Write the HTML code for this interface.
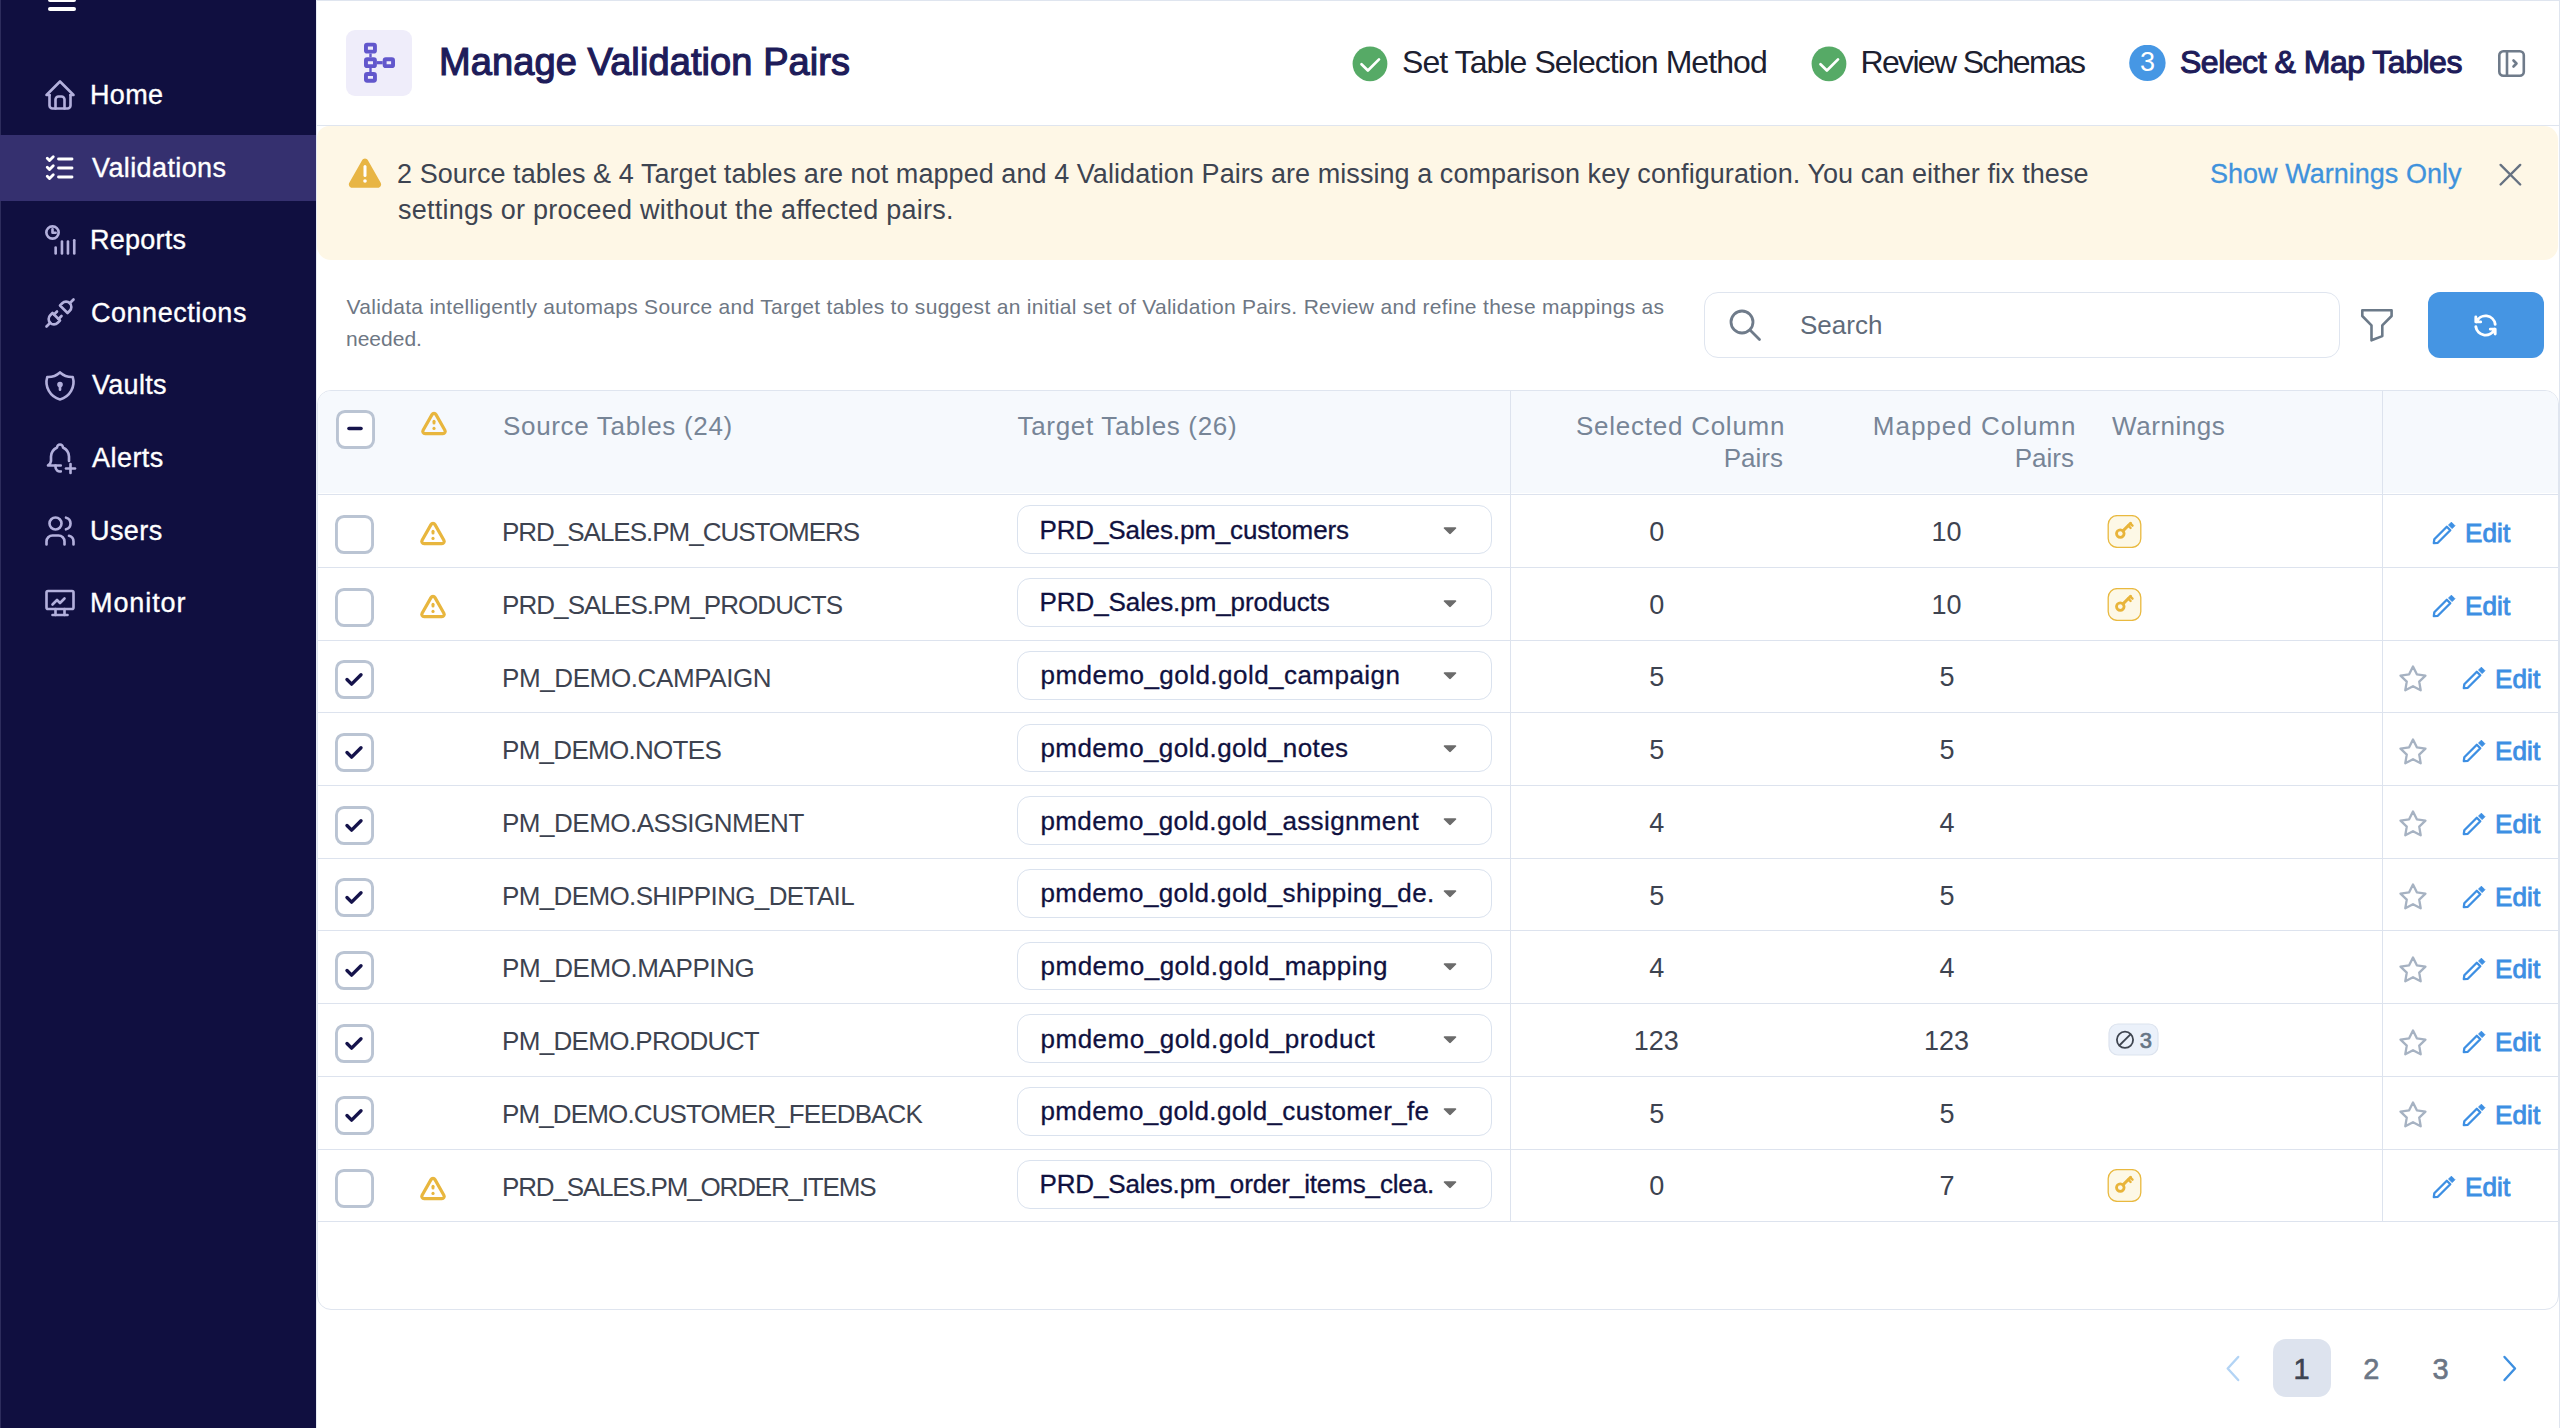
<!DOCTYPE html>
<html><head><meta charset="utf-8"><title>Manage Validation Pairs</title>
<style>
html,body{margin:0;padding:0;}
body{width:2560px;height:1428px;overflow:hidden;position:relative;background:#fff;font-family:"Liberation Sans", sans-serif;}
.t{position:absolute;white-space:nowrap;line-height:1;}
.r{position:absolute;display:block;}
</style></head><body>
<div class="r" style="left:0px;top:0px;width:316px;height:1428px;background:#100f40;"></div>
<div class="r" style="left:0px;top:0px;width:1px;height:1428px;background:#2d2c5c;"></div>
<div class="r" style="left:0px;top:135px;width:316px;height:66px;background:#35306f;"></div>
<div class="r" style="left:48px;top:-3px;width:28px;height:5px;background:#fff;border-radius:2px;"></div>
<div class="r" style="left:48px;top:7px;width:28px;height:4px;background:#fff;border-radius:2px;"></div>
<div class="t" style="top: 81.94px; font-size: 27px; color: rgb(255, 255, 255); font-weight: 400; left: 90px; -webkit-text-stroke: 0.35px rgb(255, 255, 255); letter-spacing: 0.331px;">Home</div>
<svg class="r" style="left:42px;top:77.1px;" width="36" height="36" viewBox="0 0 24 24" fill="none"><g stroke="#b3b0dc" stroke-width="1.75" stroke-linecap="round" stroke-linejoin="round"><path d="M5 12l-2 0l9 -9l9 9l-2 0"></path><path d="M5 12v7a2 2 0 0 0 2 2h10a2 2 0 0 0 2 -2v-7"></path><path d="M9 21v-6a2 2 0 0 1 2 -2h2a2 2 0 0 1 2 2v6"></path></g></svg>
<div class="t" style="top: 154.56px; font-size: 27px; color: rgb(255, 255, 255); font-weight: 400; left: 92px; -webkit-text-stroke: 0.35px rgb(255, 255, 255); letter-spacing: 0.392px;">Validations</div>
<svg class="r" style="left:42px;top:149.72000000000003px;" width="36" height="36" viewBox="0 0 24 24" fill="none"><g stroke="#ffffff" stroke-width="1.9" stroke-linecap="round" stroke-linejoin="round"><path d="M3.5 5.5l1.5 1.5l2.5 -2.5"></path><path d="M3.5 11.5l1.5 1.5l2.5 -2.5"></path><path d="M3.5 17.5l1.5 1.5l2.5 -2.5"></path><path d="M11 6l9 0"></path><path d="M11 12l9 0"></path><path d="M11 18l9 0"></path></g></svg>
<div class="t" style="top: 227.18px; font-size: 27px; color: rgb(255, 255, 255); font-weight: 400; left: 90px; -webkit-text-stroke: 0.35px rgb(255, 255, 255); letter-spacing: 0.243px;">Reports</div>
<svg class="r" style="left:42px;top:222.34000000000003px;" width="36" height="36" viewBox="0 0 24 24" fill="none"><g stroke="#b3b0dc" stroke-width="1.75" stroke-linecap="round" stroke-linejoin="round"><circle cx="7" cy="7" r="4.1"></circle><path d="M7 4.9v2.3h2.1"></path><path d="M9.1 17v4"></path><path d="M13.3 13v8"></path><path d="M17.3 13v8"></path><path d="M21.5 12.2v8.8"></path></g></svg>
<div class="t" style="top: 299.8px; font-size: 27px; color: rgb(255, 255, 255); font-weight: 400; left: 91px; -webkit-text-stroke: 0.35px rgb(255, 255, 255); letter-spacing: 0.53px;">Connections</div>
<svg class="r" style="left:42px;top:294.96000000000004px;" width="36" height="36" viewBox="0 0 24 24" fill="none"><g stroke="#b3b0dc" stroke-width="1.75" stroke-linecap="round" stroke-linejoin="round"><path d="M7 12l5 5l-1.5 1.5a3.536 3.536 0 1 1 -5 -5l1.5 -1.5z"></path><path d="M17 12l-5 -5l1.5 -1.5a3.536 3.536 0 1 1 5 5l-1.5 1.5z"></path><path d="M3 21l2.5 -2.5"></path><path d="M18.5 5.5l2.5 -2.5"></path><path d="M10 11l-2 2"></path><path d="M13 14l-2 2"></path></g></svg>
<div class="t" style="top: 372.42px; font-size: 27px; color: rgb(255, 255, 255); font-weight: 400; left: 92px; -webkit-text-stroke: 0.35px rgb(255, 255, 255); letter-spacing: 0.293px;">Vaults</div>
<svg class="r" style="left:42px;top:367.58000000000004px;" width="36" height="36" viewBox="0 0 24 24" fill="none"><g stroke="#b3b0dc" stroke-width="1.75" stroke-linecap="round" stroke-linejoin="round"><path d="M12 3a12 12 0 0 0 8.5 3a12 12 0 0 1 -8.5 15a12 12 0 0 1 -8.5 -15a12 12 0 0 0 8.5 -3"></path><circle cx="12" cy="11" r="1" fill="#b3b0dc"></circle><path d="M12 12l0 2.5"></path></g></svg>
<div class="t" style="top: 445.04px; font-size: 27px; color: rgb(255, 255, 255); font-weight: 400; left: 92px; -webkit-text-stroke: 0.35px rgb(255, 255, 255); letter-spacing: 0.457px;">Alerts</div>
<svg class="r" style="left:42px;top:440.20000000000005px;" width="36" height="36" viewBox="0 0 24 24" fill="none"><g stroke="#b3b0dc" stroke-width="1.75" stroke-linecap="round" stroke-linejoin="round"><path d="M12.5 17h-8.5a4 4 0 0 0 2 -3v-3a7 7 0 0 1 4 -6a2 2 0 1 1 4 0a7 7 0 0 1 4 6v3"></path><path d="M9 17v1a3 3 0 0 0 3.51 2.957"></path><path d="M16 19h6"></path><path d="M19 16v6"></path></g></svg>
<div class="t" style="top: 517.66px; font-size: 27px; color: rgb(255, 255, 255); font-weight: 400; left: 90px; -webkit-text-stroke: 0.35px rgb(255, 255, 255); letter-spacing: 0.424px;">Users</div>
<svg class="r" style="left:42px;top:512.8199999999999px;" width="36" height="36" viewBox="0 0 24 24" fill="none"><g stroke="#b3b0dc" stroke-width="1.75" stroke-linecap="round" stroke-linejoin="round"><circle cx="9" cy="7" r="4"></circle><path d="M3 21v-2a4 4 0 0 1 4 -4h4a4 4 0 0 1 4 4v2"></path><path d="M16 3.13a4 4 0 0 1 0 7.75"></path><path d="M21 21v-2a4 4 0 0 0 -3 -3.85"></path></g></svg>
<div class="t" style="top: 590.28px; font-size: 27px; color: rgb(255, 255, 255); font-weight: 400; left: 90px; -webkit-text-stroke: 0.35px rgb(255, 255, 255); letter-spacing: 0.91px;">Monitor</div>
<svg class="r" style="left:42px;top:585.4399999999999px;" width="36" height="36" viewBox="0 0 24 24" fill="none"><g stroke="#b3b0dc" stroke-width="1.75" stroke-linecap="round" stroke-linejoin="round"><rect x="3" y="4" width="18" height="12" rx="1"></rect><path d="M7 20h10"></path><path d="M9 16v4"></path><path d="M15 16v4"></path><path d="M7 13l3 -3l2 2l3 -3"></path></g></svg>
<div class="r" style="left:316px;top:0px;width:2244px;height:1428px;background:#ffffff;"></div>
<div class="r" style="left:316px;top:0px;width:2244px;height:1px;background:#dfe5ef;"></div>
<div class="r" style="left:316px;top:125px;width:2244px;height:1px;background:#dfe5ef;"></div>
<div class="r" style="left:316px;top:0px;width:1px;height:1428px;background:#e6ebf3;"></div>
<div class="r" style="left:2559px;top:0px;width:1px;height:1428px;background:#dfe5ef;"></div>
<svg class="r" style="left:346px;top:30px;" width="66" height="66" viewBox="0 0 66 66" fill="none"><rect width="66" height="66" rx="9" fill="#efedfa"></rect><g stroke="#6257cc" stroke-width="3.9" fill="none" stroke-linejoin="round"><rect x="19.95" y="14.65" width="9" height="7" rx="1.2"></rect><rect x="19.95" y="29.25" width="9" height="6.9" rx="1.2"></rect><rect x="19.95" y="43.95" width="9" height="6.8" rx="1.2"></rect><rect x="38.65" y="29.25" width="8.4" height="6.9" rx="1.2"></rect></g><g stroke="#6257cc" fill="none"><path d="M24.5 23.6v3.7M24.5 38.1v3.9" stroke-width="2.4"></path><path d="M30.9 32.7h5.8" stroke-width="3.2"></path></g></svg>
<div class="t" style="top: 43.33px; font-size: 38px; color: rgb(30, 28, 90); font-weight: 400; left: 439px; -webkit-text-stroke: 1.2px rgb(30, 28, 90); letter-spacing: 0.091px;">Manage Validation Pairs</div>
<svg class="r" style="left:1352px;top:46px" width="36" height="36" viewBox="0 0 36 36"><circle cx="18" cy="17.8" r="17.4" fill="#56aa66"></circle><path d="M9.5 18.2l6.4 6.3l11.1 -11.1" stroke="#fff" stroke-width="2.7" fill="none" stroke-linecap="round" stroke-linejoin="round"></path></svg>
<div class="t" style="top: 45.71px; font-size: 32px; color: rgb(28, 32, 48); font-weight: 400; left: 1402px; letter-spacing: -0.931px;">Set Table Selection Method</div>
<svg class="r" style="left:1811px;top:46px" width="36" height="36" viewBox="0 0 36 36"><circle cx="18" cy="17.8" r="17.4" fill="#56aa66"></circle><path d="M9.5 18.2l6.4 6.3l11.1 -11.1" stroke="#fff" stroke-width="2.7" fill="none" stroke-linecap="round" stroke-linejoin="round"></path></svg>
<div class="t" style="top: 45.71px; font-size: 32px; color: rgb(28, 32, 48); font-weight: 400; left: 1860.5px; letter-spacing: -1.669px;">Review Schemas</div>
<svg class="r" style="left:2129px;top:45px" width="37" height="37" viewBox="0 0 37 37"><circle cx="18.4" cy="17.9" r="18.2" fill="#4697e4"></circle></svg>
<div class="t" style="top: 49.44px; font-size: 27px; color: rgb(255, 255, 255); font-weight: 400; left: 1847.41px; width: 600px; text-align: center;">3</div>
<div class="t" style="top: 45.71px; font-size: 32px; color: rgb(30, 28, 90); font-weight: 400; left: 2180px; -webkit-text-stroke: 1.1px rgb(30, 28, 90); letter-spacing: -0.484px;">Select &amp; Map Tables</div>
<svg class="r" style="left:2497px;top:49px;" width="29" height="29" viewBox="0 0 29 29" fill="none"><g stroke="#6f7b8a" stroke-width="2.6" fill="none" stroke-linejoin="round" stroke-linecap="round"><rect x="2.3" y="2.3" width="24.5" height="24.5" rx="4"></rect><path d="M10 2.3v24.5"></path><path d="M16.5 11.5l3 3l-3 3"></path></g></svg>
<div class="r" style="left:317px;top:126px;width:2241px;height:134px;background:#fef7e6;border-radius:0 0 0 0;border-top-left-radius:12px;border-top-right-radius:14px;border-bottom-left-radius:14px;border-bottom-right-radius:14px;"></div>
<svg class="r" style="left:348px;top:157px;" width="34" height="32" viewBox="0 0 34 32" fill="none"><path d="M17 1.5c1.2 0 2.3 0.7 2.9 1.8l12.8 22.5c1.3 2.3-0.3 5-2.9 5H4.2c-2.6 0-4.2-2.8-2.9-5L14.1 3.3C14.7 2.2 15.8 1.5 17 1.5z" fill="#e8b544"></path><path d="M17 9.5v9" stroke="#fff" stroke-width="3" stroke-linecap="round"></path><circle cx="17" cy="24" r="1.8" fill="#fff"></circle></svg>
<div class="t" style="top: 160.54px; font-size: 27px; color: rgb(61, 68, 81); font-weight: 400; left: 397px; letter-spacing: 0.061px;">2 Source tables &amp; 4 Target tables are not mapped and 4 Validation Pairs are missing a comparison key configuration. You can either fix these</div>
<div class="t" style="top: 197.14px; font-size: 27px; color: rgb(61, 68, 81); font-weight: 400; left: 398px; letter-spacing: 0.243px;">settings or proceed without the affected pairs.</div>
<div class="t" style="top: 161.14px; font-size: 27px; color: rgb(63, 146, 220); font-weight: 400; left: 2210px; -webkit-text-stroke: 0.3px rgb(63, 146, 220); letter-spacing: 0.024px;">Show Warnings Only</div>
<svg class="r" style="left:2497px;top:161px;" width="26" height="26" viewBox="0 0 26 26" fill="none"><path d="M3.6 3.9l19.6 19.6M23.2 3.9l-19.6 19.6" stroke="#667282" stroke-width="2.4" stroke-linecap="round"></path></svg>
<div class="t" style="top: 295.52px; font-size: 21px; color: rgb(110, 119, 132); font-weight: 400; left: 346.5px; letter-spacing: 0.302px;">Validata intelligently automaps Source and Target tables to suggest an initial set of Validation Pairs. Review and refine these mappings as</div>
<div class="t" style="top: 327.62px; font-size: 21px; color: rgb(110, 119, 132); font-weight: 400; left: 346px;">needed.</div>
<div class="r" style="left:1704px;top:292px;width:636px;height:66px;border:1.5px solid #dfe5ef;border-radius:14px;box-sizing:border-box;background:#fff;"></div>
<svg class="r" style="left:1728px;top:308px;" width="34" height="34" viewBox="0 0 34 34" fill="none"><g stroke="#6f7b8a" stroke-width="2.8" fill="none" stroke-linecap="round"><circle cx="14" cy="14" r="11"></circle><path d="M22 22l9.5 9.5"></path></g></svg>
<div class="t" style="top: 312.49px; font-size: 26px; color: rgb(95, 107, 122); font-weight: 400; left: 1800px;">Search</div>
<svg class="r" style="left:2358px;top:306px;" width="38" height="38" viewBox="0 0 38 38" fill="none"><path d="M4.3 4.3H33.6V10L24.3 19.3V30.1L13.5 34.3V19.3L4.3 10Z" stroke="#6c7a89" stroke-width="2.6" fill="none" stroke-linejoin="round"></path></svg>
<div class="r" style="left:2428px;top:292px;width:116px;height:66px;background:#4595e3;border-radius:12px;"></div>
<svg class="r" style="left:2471px;top:311px;" width="29" height="29" viewBox="0 0 24 24" fill="none"><g stroke="#fff" stroke-width="2.4" fill="none" stroke-linecap="round" stroke-linejoin="round"><path d="M20 11a8.1 8.1 0 0 0 -15.5 -2m-.5 -4v4h4"></path><path d="M4 13a8.1 8.1 0 0 0 15.5 2m.5 4v-4h-4"></path></g></svg>
<div class="r" style="left:317px;top:390px;width:2242px;height:920px;border:1px solid #dfe5ef;border-radius:14px;box-sizing:border-box;background:#fff;"></div>
<div class="r" style="left:318px;top:391px;width:2240px;height:102px;background:#f6f9fd;border-top-left-radius:13px;border-top-right-radius:13px;"></div>
<div class="r" style="left:318px;top:494px;width:2240px;height:1px;background:#dde3ee;"></div>
<div class="r" style="left:1510px;top:391px;width:1px;height:831px;background:#dde3ee;"></div>
<div class="r" style="left:2382px;top:391px;width:1px;height:831px;background:#dde3ee;"></div>
<svg class="r" style="left:336px;top:410px" width="39" height="39" viewBox="0 0 39 39"><rect x="1.45" y="1.45" width="36.1" height="36.1" rx="7.5" fill="#fff" stroke="#bac4d3" stroke-width="2.9"></rect><path d="M13 18.5h12" stroke="#15134b" stroke-width="3.6" stroke-linecap="round"></path></svg>
<svg class="r" style="left:420px;top:410px" width="28" height="26" viewBox="0 0 28 26"><path d="M14 3.4c0.9 0 1.6 0.5 2 1.2l8.9 15.6c0.9 1.6-0.2 3.4-2 3.4H5.1c-1.8 0-2.9-1.8-2-3.4L12 4.6c0.4-0.7 1.1-1.2 2-1.2z" stroke="#e8b63e" stroke-width="3.2" fill="none" stroke-linejoin="round"></path><path d="M14 11.3v1.7" stroke="#e8b63e" stroke-width="3" stroke-linecap="round"></path><circle cx="14" cy="18.4" r="1.6" fill="#e8b63e"></circle></svg>
<div class="t" style="top: 412.99px; font-size: 26px; color: rgb(119, 133, 151); font-weight: 400; left: 503px; letter-spacing: 0.673px;">Source Tables (24)</div>
<div class="t" style="top: 412.99px; font-size: 26px; color: rgb(119, 133, 151); font-weight: 400; left: 1017.5px; letter-spacing: 0.674px;">Target Tables (26)</div>
<div class="t" style="top: 412.99px; font-size: 26px; color: rgb(119, 133, 151); font-weight: 400; right: 774.79px; text-align: right; letter-spacing: 0.747px;">Selected Column</div>
<div class="t" style="top:445.29px;font-size:26px;color:#778597;font-weight:400;right:777px;text-align:right;">Pairs</div>
<div class="t" style="top: 412.99px; font-size: 26px; color: rgb(119, 133, 151); font-weight: 400; right: 483.55px; text-align: right; letter-spacing: 0.991px;">Mapped Column</div>
<div class="t" style="top:445.29px;font-size:26px;color:#778597;font-weight:400;right:486px;text-align:right;">Pairs</div>
<div class="t" style="top: 412.99px; font-size: 26px; color: rgb(119, 133, 151); font-weight: 400; left: 2112px; letter-spacing: 0.564px;">Warnings</div>
<svg class="r" style="left:335px;top:515px" width="39" height="39" viewBox="0 0 39 39"><rect x="1.45" y="1.45" width="36.1" height="36.1" rx="7.5" fill="#fff" stroke="#bac4d3" stroke-width="2.9"></rect></svg>
<svg class="r" style="left:419px;top:520px" width="28" height="26" viewBox="0 0 28 26"><path d="M14 3.4c0.9 0 1.6 0.5 2 1.2l8.9 15.6c0.9 1.6-0.2 3.4-2 3.4H5.1c-1.8 0-2.9-1.8-2-3.4L12 4.6c0.4-0.7 1.1-1.2 2-1.2z" stroke="#e8b63e" stroke-width="3.2" fill="none" stroke-linejoin="round"></path><path d="M14 11.3v1.7" stroke="#e8b63e" stroke-width="3" stroke-linecap="round"></path><circle cx="14" cy="18.4" r="1.6" fill="#e8b63e"></circle></svg>
<div class="t" style="top: 519.29px; font-size: 26px; color: rgb(61, 67, 80); font-weight: 400; left: 502px; letter-spacing: -1.018px;">PRD_SALES.PM_CUSTOMERS</div>
<div class="r" style="left:1017px;top:505px;width:475px;height:49px;border:1px solid #dae2ee;border-radius:13px;box-sizing:border-box;background:#fff;"></div>
<div class="t" style="top: 516.79px; font-size: 26px; color: rgb(16, 17, 63); font-weight: 400; left: 1039.5px; -webkit-text-stroke: 0.3px rgb(16, 17, 63); letter-spacing: -0.124px;">PRD_Sales.pm_customers</div>
<svg class="r" style="left:1443px;top:525.8px" width="14" height="9" viewBox="0 0 14 9"><path d="M1.5 1.2h11c0.7 0 1.1 0.8 0.6 1.3l-5.3 5.3c-0.5 0.5-1.1 0.5-1.6 0l-5.3-5.3c-0.5-0.5-0.1-1.3 0.6-1.3z" fill="#6b6b6b"></path></svg>
<div class="t" style="top: 519.04px; font-size: 27px; color: rgb(61, 67, 80); font-weight: 400; left: 1356.71px; width: 600px; text-align: center;">0</div>
<div class="t" style="top: 519.04px; font-size: 27px; color: rgb(61, 67, 80); font-weight: 400; left: 1646.51px; width: 600px; text-align: center;">10</div>
<svg class="r" style="left:2107px;top:515.0px" width="35" height="33" viewBox="0 0 35 33"><rect x="1.2" y="0.6" width="32.6" height="31.8" rx="9" fill="#fdf8e6" stroke="#e9b93f" stroke-width="1.3"></rect><g stroke="#e8b43a" fill="none" stroke-linecap="round"><circle cx="13.3" cy="18.6" r="3.8" stroke-width="2.8"></circle><path d="M16 15.9l7.6 -7.6" stroke-width="3"></path><path d="M21.2 10.6l2.4 2.4M23.3 8.5l2.2 2.2" stroke-width="2.4"></path></g></svg>
<svg class="r" style="left:2430.5px;top:520.0px" width="26" height="26" viewBox="-2 -2 26 26"><path d="M1.3 17.3L13.8 4.8L17.3 8.3L4.8 20.8L0.8 21.2Z" stroke="#3d8fe3" stroke-width="2.3" fill="none" stroke-linejoin="round"></path><path d="M15.6 3L18.4 0.2L21.9 3.7L19.1 6.5Z" fill="#3d8fe3" stroke="#3d8fe3" stroke-width="1" stroke-linejoin="round"></path></svg>
<div class="t" style="top: 520.19px; font-size: 26px; color: rgb(61, 143, 227); font-weight: 400; left: 2465px; -webkit-text-stroke: 0.9px rgb(61, 143, 227); letter-spacing: 0.141px;">Edit</div>
<div class="r" style="left:318px;top:567px;width:2240px;height:1px;background:#dde3ee;"></div>
<svg class="r" style="left:335px;top:588px" width="39" height="39" viewBox="0 0 39 39"><rect x="1.45" y="1.45" width="36.1" height="36.1" rx="7.5" fill="#fff" stroke="#bac4d3" stroke-width="2.9"></rect></svg>
<svg class="r" style="left:419px;top:593px" width="28" height="26" viewBox="0 0 28 26"><path d="M14 3.4c0.9 0 1.6 0.5 2 1.2l8.9 15.6c0.9 1.6-0.2 3.4-2 3.4H5.1c-1.8 0-2.9-1.8-2-3.4L12 4.6c0.4-0.7 1.1-1.2 2-1.2z" stroke="#e8b63e" stroke-width="3.2" fill="none" stroke-linejoin="round"></path><path d="M14 11.3v1.7" stroke="#e8b63e" stroke-width="3" stroke-linecap="round"></path><circle cx="14" cy="18.4" r="1.6" fill="#e8b63e"></circle></svg>
<div class="t" style="top: 591.99px; font-size: 26px; color: rgb(61, 67, 80); font-weight: 400; left: 502px; letter-spacing: -0.931px;">PRD_SALES.PM_PRODUCTS</div>
<div class="r" style="left:1017px;top:578px;width:475px;height:49px;border:1px solid #dae2ee;border-radius:13px;box-sizing:border-box;background:#fff;"></div>
<div class="t" style="top: 589.49px; font-size: 26px; color: rgb(16, 17, 63); font-weight: 400; left: 1039.5px; -webkit-text-stroke: 0.3px rgb(16, 17, 63); letter-spacing: -0.086px;">PRD_Sales.pm_products</div>
<svg class="r" style="left:1443px;top:598.5px" width="14" height="9" viewBox="0 0 14 9"><path d="M1.5 1.2h11c0.7 0 1.1 0.8 0.6 1.3l-5.3 5.3c-0.5 0.5-1.1 0.5-1.6 0l-5.3-5.3c-0.5-0.5-0.1-1.3 0.6-1.3z" fill="#6b6b6b"></path></svg>
<div class="t" style="top: 591.74px; font-size: 27px; color: rgb(61, 67, 80); font-weight: 400; left: 1356.71px; width: 600px; text-align: center;">0</div>
<div class="t" style="top: 591.74px; font-size: 27px; color: rgb(61, 67, 80); font-weight: 400; left: 1646.51px; width: 600px; text-align: center;">10</div>
<svg class="r" style="left:2107px;top:587.7px" width="35" height="33" viewBox="0 0 35 33"><rect x="1.2" y="0.6" width="32.6" height="31.8" rx="9" fill="#fdf8e6" stroke="#e9b93f" stroke-width="1.3"></rect><g stroke="#e8b43a" fill="none" stroke-linecap="round"><circle cx="13.3" cy="18.6" r="3.8" stroke-width="2.8"></circle><path d="M16 15.9l7.6 -7.6" stroke-width="3"></path><path d="M21.2 10.6l2.4 2.4M23.3 8.5l2.2 2.2" stroke-width="2.4"></path></g></svg>
<svg class="r" style="left:2430.5px;top:592.7px" width="26" height="26" viewBox="-2 -2 26 26"><path d="M1.3 17.3L13.8 4.8L17.3 8.3L4.8 20.8L0.8 21.2Z" stroke="#3d8fe3" stroke-width="2.3" fill="none" stroke-linejoin="round"></path><path d="M15.6 3L18.4 0.2L21.9 3.7L19.1 6.5Z" fill="#3d8fe3" stroke="#3d8fe3" stroke-width="1" stroke-linejoin="round"></path></svg>
<div class="t" style="top: 592.89px; font-size: 26px; color: rgb(61, 143, 227); font-weight: 400; left: 2465px; -webkit-text-stroke: 0.9px rgb(61, 143, 227); letter-spacing: 0.141px;">Edit</div>
<div class="r" style="left:318px;top:640px;width:2240px;height:1px;background:#dde3ee;"></div>
<svg class="r" style="left:335px;top:660px" width="39" height="39" viewBox="0 0 39 39"><rect x="1.45" y="1.45" width="36.1" height="36.1" rx="7.5" fill="#fff" stroke="#bac4d3" stroke-width="2.9"></rect><path d="M12 19.5l4.6 4.6l9.4 -9.4" stroke="#15134b" stroke-width="3.4" fill="none" stroke-linecap="round" stroke-linejoin="round"></path></svg>
<div class="t" style="top: 664.69px; font-size: 26px; color: rgb(61, 67, 80); font-weight: 400; left: 502px; letter-spacing: -0.391px;">PM_DEMO.CAMPAIGN</div>
<div class="r" style="left:1017px;top:651px;width:475px;height:49px;border:1px solid #dae2ee;border-radius:13px;box-sizing:border-box;background:#fff;"></div>
<div class="t" style="top: 662.19px; font-size: 26px; color: rgb(16, 17, 63); font-weight: 400; left: 1040.5px; -webkit-text-stroke: 0.3px rgb(16, 17, 63); letter-spacing: 0.463px;">pmdemo_gold.gold_campaign</div>
<svg class="r" style="left:1443px;top:671.2px" width="14" height="9" viewBox="0 0 14 9"><path d="M1.5 1.2h11c0.7 0 1.1 0.8 0.6 1.3l-5.3 5.3c-0.5 0.5-1.1 0.5-1.6 0l-5.3-5.3c-0.5-0.5-0.1-1.3 0.6-1.3z" fill="#6b6b6b"></path></svg>
<div class="t" style="top: 664.44px; font-size: 27px; color: rgb(61, 67, 80); font-weight: 400; left: 1356.71px; width: 600px; text-align: center;">5</div>
<div class="t" style="top: 664.44px; font-size: 27px; color: rgb(61, 67, 80); font-weight: 400; left: 1647.01px; width: 600px; text-align: center;">5</div>
<svg class="r" style="left:2397.7px;top:664.0px" width="30" height="30" viewBox="0 0 24 24"><path d="M12 17.75l-6.172 3.245l1.179 -6.873l-5 -4.867l6.9 -1l3.086 -6.253l3.086 6.253l6.9 1l-5 4.867l1.179 6.873z" stroke="#a6b2c2" stroke-width="1.85" fill="none" stroke-linejoin="round"></path></svg>
<svg class="r" style="left:2460.5px;top:665.4px" width="26" height="26" viewBox="-2 -2 26 26"><path d="M1.3 17.3L13.8 4.8L17.3 8.3L4.8 20.8L0.8 21.2Z" stroke="#3d8fe3" stroke-width="2.3" fill="none" stroke-linejoin="round"></path><path d="M15.6 3L18.4 0.2L21.9 3.7L19.1 6.5Z" fill="#3d8fe3" stroke="#3d8fe3" stroke-width="1" stroke-linejoin="round"></path></svg>
<div class="t" style="top: 665.59px; font-size: 26px; color: rgb(61, 143, 227); font-weight: 400; left: 2495px; -webkit-text-stroke: 0.9px rgb(61, 143, 227); letter-spacing: 0.141px;">Edit</div>
<div class="r" style="left:318px;top:712px;width:2240px;height:1px;background:#dde3ee;"></div>
<svg class="r" style="left:335px;top:733px" width="39" height="39" viewBox="0 0 39 39"><rect x="1.45" y="1.45" width="36.1" height="36.1" rx="7.5" fill="#fff" stroke="#bac4d3" stroke-width="2.9"></rect><path d="M12 19.5l4.6 4.6l9.4 -9.4" stroke="#15134b" stroke-width="3.4" fill="none" stroke-linecap="round" stroke-linejoin="round"></path></svg>
<div class="t" style="top: 737.39px; font-size: 26px; color: rgb(61, 67, 80); font-weight: 400; left: 502px; letter-spacing: -0.709px;">PM_DEMO.NOTES</div>
<div class="r" style="left:1017px;top:724px;width:475px;height:48px;border:1px solid #dae2ee;border-radius:13px;box-sizing:border-box;background:#fff;"></div>
<div class="t" style="top: 734.89px; font-size: 26px; color: rgb(16, 17, 63); font-weight: 400; left: 1040.5px; -webkit-text-stroke: 0.3px rgb(16, 17, 63); letter-spacing: 0.394px;">pmdemo_gold.gold_notes</div>
<svg class="r" style="left:1443px;top:743.9px" width="14" height="9" viewBox="0 0 14 9"><path d="M1.5 1.2h11c0.7 0 1.1 0.8 0.6 1.3l-5.3 5.3c-0.5 0.5-1.1 0.5-1.6 0l-5.3-5.3c-0.5-0.5-0.1-1.3 0.6-1.3z" fill="#6b6b6b"></path></svg>
<div class="t" style="top: 737.14px; font-size: 27px; color: rgb(61, 67, 80); font-weight: 400; left: 1356.71px; width: 600px; text-align: center;">5</div>
<div class="t" style="top: 737.14px; font-size: 27px; color: rgb(61, 67, 80); font-weight: 400; left: 1647.01px; width: 600px; text-align: center;">5</div>
<svg class="r" style="left:2397.7px;top:736.8px" width="30" height="30" viewBox="0 0 24 24"><path d="M12 17.75l-6.172 3.245l1.179 -6.873l-5 -4.867l6.9 -1l3.086 -6.253l3.086 6.253l6.9 1l-5 4.867l1.179 6.873z" stroke="#a6b2c2" stroke-width="1.85" fill="none" stroke-linejoin="round"></path></svg>
<svg class="r" style="left:2460.5px;top:738.1px" width="26" height="26" viewBox="-2 -2 26 26"><path d="M1.3 17.3L13.8 4.8L17.3 8.3L4.8 20.8L0.8 21.2Z" stroke="#3d8fe3" stroke-width="2.3" fill="none" stroke-linejoin="round"></path><path d="M15.6 3L18.4 0.2L21.9 3.7L19.1 6.5Z" fill="#3d8fe3" stroke="#3d8fe3" stroke-width="1" stroke-linejoin="round"></path></svg>
<div class="t" style="top: 738.29px; font-size: 26px; color: rgb(61, 143, 227); font-weight: 400; left: 2495px; -webkit-text-stroke: 0.9px rgb(61, 143, 227); letter-spacing: 0.141px;">Edit</div>
<div class="r" style="left:318px;top:785px;width:2240px;height:1px;background:#dde3ee;"></div>
<svg class="r" style="left:335px;top:806px" width="39" height="39" viewBox="0 0 39 39"><rect x="1.45" y="1.45" width="36.1" height="36.1" rx="7.5" fill="#fff" stroke="#bac4d3" stroke-width="2.9"></rect><path d="M12 19.5l4.6 4.6l9.4 -9.4" stroke="#15134b" stroke-width="3.4" fill="none" stroke-linecap="round" stroke-linejoin="round"></path></svg>
<div class="t" style="top: 810.09px; font-size: 26px; color: rgb(61, 67, 80); font-weight: 400; left: 502px; letter-spacing: -0.489px;">PM_DEMO.ASSIGNMENT</div>
<div class="r" style="left:1017px;top:796px;width:475px;height:49px;border:1px solid #dae2ee;border-radius:13px;box-sizing:border-box;background:#fff;"></div>
<div class="t" style="top: 807.59px; font-size: 26px; color: rgb(16, 17, 63); font-weight: 400; left: 1040.5px; -webkit-text-stroke: 0.3px rgb(16, 17, 63); letter-spacing: 0.371px;">pmdemo_gold.gold_assignment</div>
<svg class="r" style="left:1443px;top:816.6px" width="14" height="9" viewBox="0 0 14 9"><path d="M1.5 1.2h11c0.7 0 1.1 0.8 0.6 1.3l-5.3 5.3c-0.5 0.5-1.1 0.5-1.6 0l-5.3-5.3c-0.5-0.5-0.1-1.3 0.6-1.3z" fill="#6b6b6b"></path></svg>
<div class="t" style="top: 809.84px; font-size: 27px; color: rgb(61, 67, 80); font-weight: 400; left: 1356.71px; width: 600px; text-align: center;">4</div>
<div class="t" style="top: 809.84px; font-size: 27px; color: rgb(61, 67, 80); font-weight: 400; left: 1647.01px; width: 600px; text-align: center;">4</div>
<svg class="r" style="left:2397.7px;top:809.4px" width="30" height="30" viewBox="0 0 24 24"><path d="M12 17.75l-6.172 3.245l1.179 -6.873l-5 -4.867l6.9 -1l3.086 -6.253l3.086 6.253l6.9 1l-5 4.867l1.179 6.873z" stroke="#a6b2c2" stroke-width="1.85" fill="none" stroke-linejoin="round"></path></svg>
<svg class="r" style="left:2460.5px;top:810.8px" width="26" height="26" viewBox="-2 -2 26 26"><path d="M1.3 17.3L13.8 4.8L17.3 8.3L4.8 20.8L0.8 21.2Z" stroke="#3d8fe3" stroke-width="2.3" fill="none" stroke-linejoin="round"></path><path d="M15.6 3L18.4 0.2L21.9 3.7L19.1 6.5Z" fill="#3d8fe3" stroke="#3d8fe3" stroke-width="1" stroke-linejoin="round"></path></svg>
<div class="t" style="top: 810.99px; font-size: 26px; color: rgb(61, 143, 227); font-weight: 400; left: 2495px; -webkit-text-stroke: 0.9px rgb(61, 143, 227); letter-spacing: 0.141px;">Edit</div>
<div class="r" style="left:318px;top:858px;width:2240px;height:1px;background:#dde3ee;"></div>
<svg class="r" style="left:335px;top:878px" width="39" height="39" viewBox="0 0 39 39"><rect x="1.45" y="1.45" width="36.1" height="36.1" rx="7.5" fill="#fff" stroke="#bac4d3" stroke-width="2.9"></rect><path d="M12 19.5l4.6 4.6l9.4 -9.4" stroke="#15134b" stroke-width="3.4" fill="none" stroke-linecap="round" stroke-linejoin="round"></path></svg>
<div class="t" style="top: 882.79px; font-size: 26px; color: rgb(61, 67, 80); font-weight: 400; left: 502px; letter-spacing: -0.629px;">PM_DEMO.SHIPPING_DETAIL</div>
<div class="r" style="left:1017px;top:869px;width:475px;height:49px;border:1px solid #dae2ee;border-radius:13px;box-sizing:border-box;background:#fff;"></div>
<div class="t" style="top: 880.29px; font-size: 26px; color: rgb(16, 17, 63); font-weight: 400; left: 1040.5px; -webkit-text-stroke: 0.3px rgb(16, 17, 63); letter-spacing: 0.381px;">pmdemo_gold.gold_shipping_de.</div>
<svg class="r" style="left:1443px;top:889.3px" width="14" height="9" viewBox="0 0 14 9"><path d="M1.5 1.2h11c0.7 0 1.1 0.8 0.6 1.3l-5.3 5.3c-0.5 0.5-1.1 0.5-1.6 0l-5.3-5.3c-0.5-0.5-0.1-1.3 0.6-1.3z" fill="#6b6b6b"></path></svg>
<div class="t" style="top: 882.54px; font-size: 27px; color: rgb(61, 67, 80); font-weight: 400; left: 1356.71px; width: 600px; text-align: center;">5</div>
<div class="t" style="top: 882.54px; font-size: 27px; color: rgb(61, 67, 80); font-weight: 400; left: 1647.01px; width: 600px; text-align: center;">5</div>
<svg class="r" style="left:2397.7px;top:882.1px" width="30" height="30" viewBox="0 0 24 24"><path d="M12 17.75l-6.172 3.245l1.179 -6.873l-5 -4.867l6.9 -1l3.086 -6.253l3.086 6.253l6.9 1l-5 4.867l1.179 6.873z" stroke="#a6b2c2" stroke-width="1.85" fill="none" stroke-linejoin="round"></path></svg>
<svg class="r" style="left:2460.5px;top:883.5px" width="26" height="26" viewBox="-2 -2 26 26"><path d="M1.3 17.3L13.8 4.8L17.3 8.3L4.8 20.8L0.8 21.2Z" stroke="#3d8fe3" stroke-width="2.3" fill="none" stroke-linejoin="round"></path><path d="M15.6 3L18.4 0.2L21.9 3.7L19.1 6.5Z" fill="#3d8fe3" stroke="#3d8fe3" stroke-width="1" stroke-linejoin="round"></path></svg>
<div class="t" style="top: 883.69px; font-size: 26px; color: rgb(61, 143, 227); font-weight: 400; left: 2495px; -webkit-text-stroke: 0.9px rgb(61, 143, 227); letter-spacing: 0.141px;">Edit</div>
<div class="r" style="left:318px;top:930px;width:2240px;height:1px;background:#dde3ee;"></div>
<svg class="r" style="left:335px;top:951px" width="39" height="39" viewBox="0 0 39 39"><rect x="1.45" y="1.45" width="36.1" height="36.1" rx="7.5" fill="#fff" stroke="#bac4d3" stroke-width="2.9"></rect><path d="M12 19.5l4.6 4.6l9.4 -9.4" stroke="#15134b" stroke-width="3.4" fill="none" stroke-linecap="round" stroke-linejoin="round"></path></svg>
<div class="t" style="top: 955.49px; font-size: 26px; color: rgb(61, 67, 80); font-weight: 400; left: 502px; letter-spacing: -0.419px;">PM_DEMO.MAPPING</div>
<div class="r" style="left:1017px;top:942px;width:475px;height:48px;border:1px solid #dae2ee;border-radius:13px;box-sizing:border-box;background:#fff;"></div>
<div class="t" style="top: 952.99px; font-size: 26px; color: rgb(16, 17, 63); font-weight: 400; left: 1040.5px; -webkit-text-stroke: 0.3px rgb(16, 17, 63); letter-spacing: 0.505px;">pmdemo_gold.gold_mapping</div>
<svg class="r" style="left:1443px;top:962.0px" width="14" height="9" viewBox="0 0 14 9"><path d="M1.5 1.2h11c0.7 0 1.1 0.8 0.6 1.3l-5.3 5.3c-0.5 0.5-1.1 0.5-1.6 0l-5.3-5.3c-0.5-0.5-0.1-1.3 0.6-1.3z" fill="#6b6b6b"></path></svg>
<div class="t" style="top: 955.24px; font-size: 27px; color: rgb(61, 67, 80); font-weight: 400; left: 1356.71px; width: 600px; text-align: center;">4</div>
<div class="t" style="top: 955.24px; font-size: 27px; color: rgb(61, 67, 80); font-weight: 400; left: 1647.01px; width: 600px; text-align: center;">4</div>
<svg class="r" style="left:2397.7px;top:954.9px" width="30" height="30" viewBox="0 0 24 24"><path d="M12 17.75l-6.172 3.245l1.179 -6.873l-5 -4.867l6.9 -1l3.086 -6.253l3.086 6.253l6.9 1l-5 4.867l1.179 6.873z" stroke="#a6b2c2" stroke-width="1.85" fill="none" stroke-linejoin="round"></path></svg>
<svg class="r" style="left:2460.5px;top:956.2px" width="26" height="26" viewBox="-2 -2 26 26"><path d="M1.3 17.3L13.8 4.8L17.3 8.3L4.8 20.8L0.8 21.2Z" stroke="#3d8fe3" stroke-width="2.3" fill="none" stroke-linejoin="round"></path><path d="M15.6 3L18.4 0.2L21.9 3.7L19.1 6.5Z" fill="#3d8fe3" stroke="#3d8fe3" stroke-width="1" stroke-linejoin="round"></path></svg>
<div class="t" style="top: 956.39px; font-size: 26px; color: rgb(61, 143, 227); font-weight: 400; left: 2495px; -webkit-text-stroke: 0.9px rgb(61, 143, 227); letter-spacing: 0.141px;">Edit</div>
<div class="r" style="left:318px;top:1003px;width:2240px;height:1px;background:#dde3ee;"></div>
<svg class="r" style="left:335px;top:1024px" width="39" height="39" viewBox="0 0 39 39"><rect x="1.45" y="1.45" width="36.1" height="36.1" rx="7.5" fill="#fff" stroke="#bac4d3" stroke-width="2.9"></rect><path d="M12 19.5l4.6 4.6l9.4 -9.4" stroke="#15134b" stroke-width="3.4" fill="none" stroke-linecap="round" stroke-linejoin="round"></path></svg>
<div class="t" style="top: 1028.19px; font-size: 26px; color: rgb(61, 67, 80); font-weight: 400; left: 502px; letter-spacing: -0.682px;">PM_DEMO.PRODUCT</div>
<div class="r" style="left:1017px;top:1014px;width:475px;height:49px;border:1px solid #dae2ee;border-radius:13px;box-sizing:border-box;background:#fff;"></div>
<div class="t" style="top: 1025.69px; font-size: 26px; color: rgb(16, 17, 63); font-weight: 400; left: 1040.5px; -webkit-text-stroke: 0.3px rgb(16, 17, 63); letter-spacing: 0.513px;">pmdemo_gold.gold_product</div>
<svg class="r" style="left:1443px;top:1034.7px" width="14" height="9" viewBox="0 0 14 9"><path d="M1.5 1.2h11c0.7 0 1.1 0.8 0.6 1.3l-5.3 5.3c-0.5 0.5-1.1 0.5-1.6 0l-5.3-5.3c-0.5-0.5-0.1-1.3 0.6-1.3z" fill="#6b6b6b"></path></svg>
<div class="t" style="top: 1027.94px; font-size: 27px; color: rgb(61, 67, 80); font-weight: 400; left: 1356.21px; width: 600px; text-align: center;">123</div>
<div class="t" style="top: 1027.94px; font-size: 27px; color: rgb(61, 67, 80); font-weight: 400; left: 1646.51px; width: 600px; text-align: center;">123</div>
<svg class="r" style="left:2107.5px;top:1023.3px" width="51" height="33" viewBox="0 0 51 33"><rect x="1" y="1" width="49" height="31" rx="9" fill="#ebf1fa" stroke="#dce3ee" stroke-width="1.2"></rect><g stroke="#3f4550" stroke-width="1.8" fill="none"><circle cx="17" cy="16.8" r="8.1"></circle><path d="M11.3 22.5l11.4 -11.4"></path></g></svg>
<div class="t" style="top: 1029.97px; font-size: 22px; color: rgb(102, 117, 133); font-weight: 400; left: 1845.82px; width: 600px; text-align: center; -webkit-text-stroke: 0.7px rgb(102, 117, 133);">3</div>
<svg class="r" style="left:2397.7px;top:1027.6px" width="30" height="30" viewBox="0 0 24 24"><path d="M12 17.75l-6.172 3.245l1.179 -6.873l-5 -4.867l6.9 -1l3.086 -6.253l3.086 6.253l6.9 1l-5 4.867l1.179 6.873z" stroke="#a6b2c2" stroke-width="1.85" fill="none" stroke-linejoin="round"></path></svg>
<svg class="r" style="left:2460.5px;top:1028.9px" width="26" height="26" viewBox="-2 -2 26 26"><path d="M1.3 17.3L13.8 4.8L17.3 8.3L4.8 20.8L0.8 21.2Z" stroke="#3d8fe3" stroke-width="2.3" fill="none" stroke-linejoin="round"></path><path d="M15.6 3L18.4 0.2L21.9 3.7L19.1 6.5Z" fill="#3d8fe3" stroke="#3d8fe3" stroke-width="1" stroke-linejoin="round"></path></svg>
<div class="t" style="top: 1029.09px; font-size: 26px; color: rgb(61, 143, 227); font-weight: 400; left: 2495px; -webkit-text-stroke: 0.9px rgb(61, 143, 227); letter-spacing: 0.141px;">Edit</div>
<div class="r" style="left:318px;top:1076px;width:2240px;height:1px;background:#dde3ee;"></div>
<svg class="r" style="left:335px;top:1096px" width="39" height="39" viewBox="0 0 39 39"><rect x="1.45" y="1.45" width="36.1" height="36.1" rx="7.5" fill="#fff" stroke="#bac4d3" stroke-width="2.9"></rect><path d="M12 19.5l4.6 4.6l9.4 -9.4" stroke="#15134b" stroke-width="3.4" fill="none" stroke-linecap="round" stroke-linejoin="round"></path></svg>
<div class="t" style="top: 1100.89px; font-size: 26px; color: rgb(61, 67, 80); font-weight: 400; left: 502px; letter-spacing: -0.865px;">PM_DEMO.CUSTOMER_FEEDBACK</div>
<div class="r" style="left:1017px;top:1087px;width:475px;height:49px;border:1px solid #dae2ee;border-radius:13px;box-sizing:border-box;background:#fff;"></div>
<div class="t" style="top: 1098.39px; font-size: 26px; color: rgb(16, 17, 63); font-weight: 400; left: 1040.5px; -webkit-text-stroke: 0.3px rgb(16, 17, 63); letter-spacing: 0.366px;">pmdemo_gold.gold_customer_fe</div>
<svg class="r" style="left:1443px;top:1107.4px" width="14" height="9" viewBox="0 0 14 9"><path d="M1.5 1.2h11c0.7 0 1.1 0.8 0.6 1.3l-5.3 5.3c-0.5 0.5-1.1 0.5-1.6 0l-5.3-5.3c-0.5-0.5-0.1-1.3 0.6-1.3z" fill="#6b6b6b"></path></svg>
<div class="t" style="top: 1100.64px; font-size: 27px; color: rgb(61, 67, 80); font-weight: 400; left: 1356.71px; width: 600px; text-align: center;">5</div>
<div class="t" style="top: 1100.64px; font-size: 27px; color: rgb(61, 67, 80); font-weight: 400; left: 1647.01px; width: 600px; text-align: center;">5</div>
<svg class="r" style="left:2397.7px;top:1100.2px" width="30" height="30" viewBox="0 0 24 24"><path d="M12 17.75l-6.172 3.245l1.179 -6.873l-5 -4.867l6.9 -1l3.086 -6.253l3.086 6.253l6.9 1l-5 4.867l1.179 6.873z" stroke="#a6b2c2" stroke-width="1.85" fill="none" stroke-linejoin="round"></path></svg>
<svg class="r" style="left:2460.5px;top:1101.6px" width="26" height="26" viewBox="-2 -2 26 26"><path d="M1.3 17.3L13.8 4.8L17.3 8.3L4.8 20.8L0.8 21.2Z" stroke="#3d8fe3" stroke-width="2.3" fill="none" stroke-linejoin="round"></path><path d="M15.6 3L18.4 0.2L21.9 3.7L19.1 6.5Z" fill="#3d8fe3" stroke="#3d8fe3" stroke-width="1" stroke-linejoin="round"></path></svg>
<div class="t" style="top: 1101.79px; font-size: 26px; color: rgb(61, 143, 227); font-weight: 400; left: 2495px; -webkit-text-stroke: 0.9px rgb(61, 143, 227); letter-spacing: 0.141px;">Edit</div>
<div class="r" style="left:318px;top:1149px;width:2240px;height:1px;background:#dde3ee;"></div>
<svg class="r" style="left:335px;top:1169px" width="39" height="39" viewBox="0 0 39 39"><rect x="1.45" y="1.45" width="36.1" height="36.1" rx="7.5" fill="#fff" stroke="#bac4d3" stroke-width="2.9"></rect></svg>
<svg class="r" style="left:419px;top:1175px" width="28" height="26" viewBox="0 0 28 26"><path d="M14 3.4c0.9 0 1.6 0.5 2 1.2l8.9 15.6c0.9 1.6-0.2 3.4-2 3.4H5.1c-1.8 0-2.9-1.8-2-3.4L12 4.6c0.4-0.7 1.1-1.2 2-1.2z" stroke="#e8b63e" stroke-width="3.2" fill="none" stroke-linejoin="round"></path><path d="M14 11.3v1.7" stroke="#e8b63e" stroke-width="3" stroke-linecap="round"></path><circle cx="14" cy="18.4" r="1.6" fill="#e8b63e"></circle></svg>
<div class="t" style="top: 1173.59px; font-size: 26px; color: rgb(61, 67, 80); font-weight: 400; left: 502px; letter-spacing: -1.179px;">PRD_SALES.PM_ORDER_ITEMS</div>
<div class="r" style="left:1017px;top:1160px;width:475px;height:49px;border:1px solid #dae2ee;border-radius:13px;box-sizing:border-box;background:#fff;"></div>
<div class="t" style="top: 1171.09px; font-size: 26px; color: rgb(16, 17, 63); font-weight: 400; left: 1039.5px; -webkit-text-stroke: 0.3px rgb(16, 17, 63); letter-spacing: -0.142px;">PRD_Sales.pm_order_items_clea.</div>
<svg class="r" style="left:1443px;top:1180.1px" width="14" height="9" viewBox="0 0 14 9"><path d="M1.5 1.2h11c0.7 0 1.1 0.8 0.6 1.3l-5.3 5.3c-0.5 0.5-1.1 0.5-1.6 0l-5.3-5.3c-0.5-0.5-0.1-1.3 0.6-1.3z" fill="#6b6b6b"></path></svg>
<div class="t" style="top: 1173.34px; font-size: 27px; color: rgb(61, 67, 80); font-weight: 400; left: 1356.71px; width: 600px; text-align: center;">0</div>
<div class="t" style="top: 1173.34px; font-size: 27px; color: rgb(61, 67, 80); font-weight: 400; left: 1647.01px; width: 600px; text-align: center;">7</div>
<svg class="r" style="left:2107px;top:1169.3px" width="35" height="33" viewBox="0 0 35 33"><rect x="1.2" y="0.6" width="32.6" height="31.8" rx="9" fill="#fdf8e6" stroke="#e9b93f" stroke-width="1.3"></rect><g stroke="#e8b43a" fill="none" stroke-linecap="round"><circle cx="13.3" cy="18.6" r="3.8" stroke-width="2.8"></circle><path d="M16 15.9l7.6 -7.6" stroke-width="3"></path><path d="M21.2 10.6l2.4 2.4M23.3 8.5l2.2 2.2" stroke-width="2.4"></path></g></svg>
<svg class="r" style="left:2430.5px;top:1174.3px" width="26" height="26" viewBox="-2 -2 26 26"><path d="M1.3 17.3L13.8 4.8L17.3 8.3L4.8 20.8L0.8 21.2Z" stroke="#3d8fe3" stroke-width="2.3" fill="none" stroke-linejoin="round"></path><path d="M15.6 3L18.4 0.2L21.9 3.7L19.1 6.5Z" fill="#3d8fe3" stroke="#3d8fe3" stroke-width="1" stroke-linejoin="round"></path></svg>
<div class="t" style="top: 1174.49px; font-size: 26px; color: rgb(61, 143, 227); font-weight: 400; left: 2465px; -webkit-text-stroke: 0.9px rgb(61, 143, 227); letter-spacing: 0.141px;">Edit</div>
<div class="r" style="left:318px;top:1221px;width:2240px;height:1px;background:#dde3ee;"></div>
<svg class="r" style="left:2222px;top:1353px;" width="22" height="30" viewBox="0 0 22 30" fill="none"><path d="M16.2 4l-10.5 11.5l10.5 11.5" stroke="#b3d4f5" stroke-width="2.4" fill="none" stroke-linecap="round" stroke-linejoin="round"></path></svg>
<div class="r" style="left:2273px;top:1339px;width:58px;height:58px;background:#dde3ee;border-radius:13px;"></div>
<div class="t" style="top: 1354.65px; font-size: 29px; color: rgb(61, 68, 81); font-weight: 400; left: 2001.56px; width: 600px; text-align: center; -webkit-text-stroke: 0.6px rgb(61, 68, 81);">1</div>
<div class="t" style="top: 1354.65px; font-size: 29px; color: rgb(107, 118, 133); font-weight: 400; left: 2071.36px; width: 600px; text-align: center; -webkit-text-stroke: 0.6px rgb(107, 118, 133);">2</div>
<div class="t" style="top: 1354.65px; font-size: 29px; color: rgb(107, 118, 133); font-weight: 400; left: 2140.66px; width: 600px; text-align: center; -webkit-text-stroke: 0.6px rgb(107, 118, 133);">3</div>
<svg class="r" style="left:2499px;top:1353px;" width="22" height="30" viewBox="0 0 22 30" fill="none"><path d="M5.5 4l10.5 11.5l-10.5 11.5" stroke="#3d8fe0" stroke-width="2.4" fill="none" stroke-linecap="round" stroke-linejoin="round"></path></svg>
</body></html>
